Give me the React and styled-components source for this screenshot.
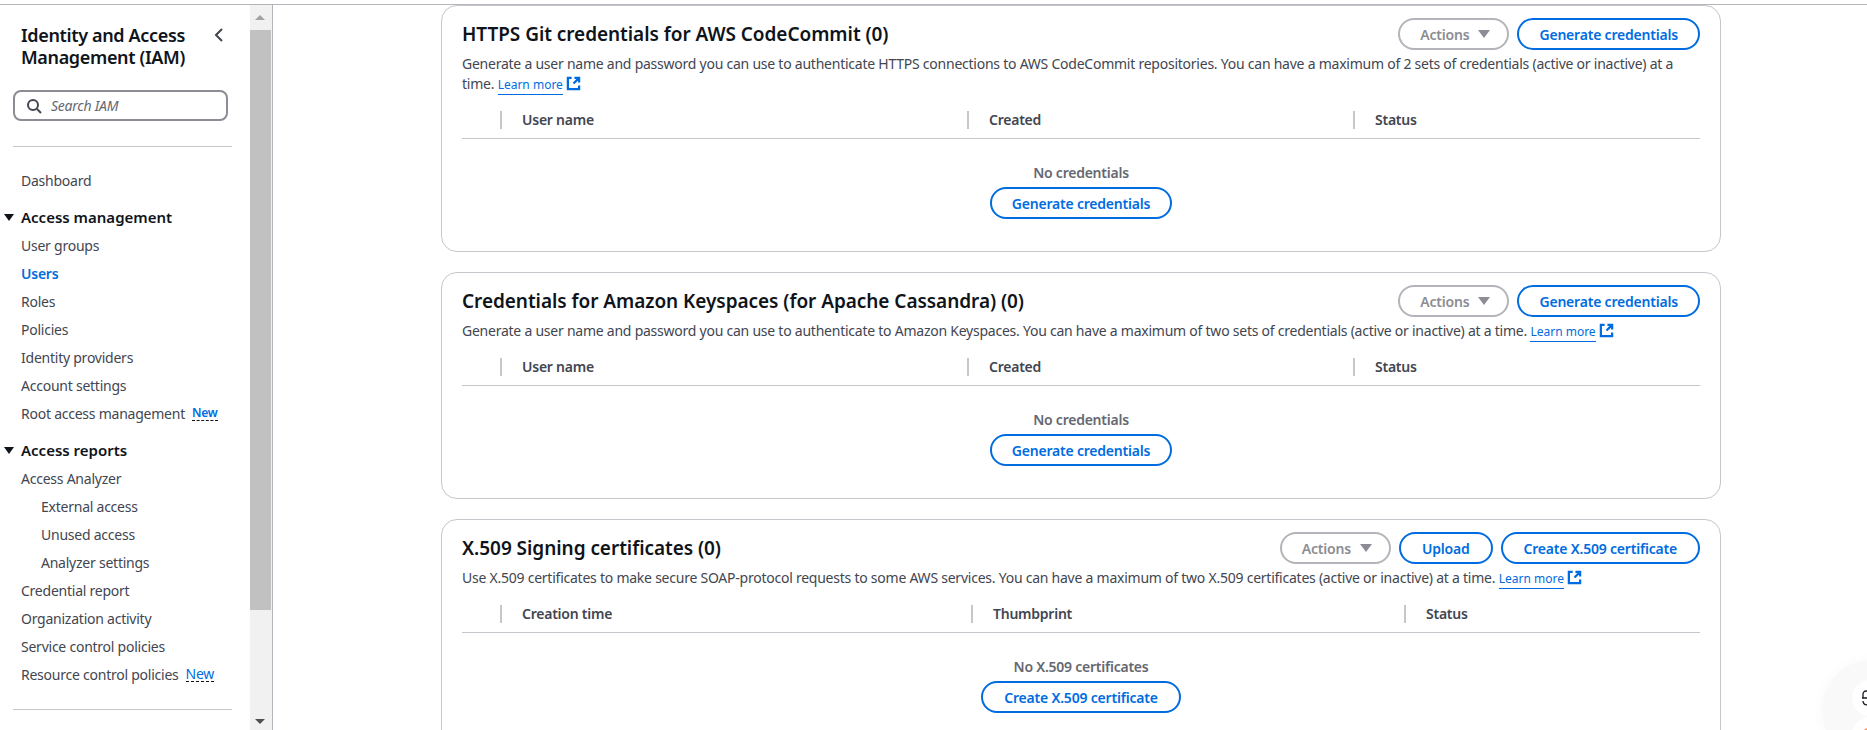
import styled, { createGlobalStyle } from "styled-components";

const GlobalStyle = createGlobalStyle`
	html, body {
		margin: 0;
		padding: 0;
		height: 100%;
		overflow: hidden;
		background: white;
	}
	* {
		box-sizing: border-box;
	}
`;

const Page = styled.div`
	height: 730px;
	font-family: "Noto Sans", sans-serif;
	letter-spacing: -0.24px;
	color: #424650;
	display: flex;
	flex-direction: column;
	position: relative;
	overflow: hidden;
`;
const TopLine = styled.div`
	height: 5px;
	flex: none;
	border-bottom: 1px solid #b4b4bb;
`;
const Body = styled.div`
	flex: 1;
	display: flex;
	min-height: 0;
`;
const Sidebar = styled.nav`
	width: 250px;
	flex: none;
	padding-top: 19px;
`;
const SideHead = styled.div`
	display: flex;
	justify-content: space-between;
	align-items: flex-start;
	padding: 0 25px 0 21px;
`;
const SideTitle = styled.h2`
	margin: 0;
	font-size: 18px;
	line-height: 22px;
	font-weight: 600;
	letter-spacing: -0.35px;
	color: #0f141a;
`;
const CollapseIcon = styled.svg`
	margin-top: 3px;
`;
const SearchBox = styled.div`
	margin: 22px 0 0 13px;
	width: 215px;
	height: 31px;
	border: 2px solid #8c8c94;
	border-radius: 8px;
	display: flex;
	align-items: center;
	gap: 9px;
	padding-left: 11px;
	font-size: 14px;
	font-style: italic;
	color: #656871;
`;
const Rule = styled.hr`
	margin: ${(p) => p.$top}px 18px 0 13px;
	border: none;
	border-top: 1px solid #c6c6cd;
`;
const NavList = styled.div`
	padding-top: 19px;
`;
const NavItem = styled.a`
	display: flex;
	align-items: center;
	height: 28px;
	padding-left: ${(p) => (p.$sub ? 41 : 21)}px;
	font-size: 14px;
	color: ${(p) => (p.$active ? "#006ce0" : "#424650")};
	font-weight: ${(p) => (p.$active ? 600 : 400)};
`;
const NavGroup = styled.div`
	display: flex;
	align-items: center;
	height: 22px;
	margin-top: 12px;
	margin-bottom: 3px;
	padding-left: 4px;
	gap: 7px;
	font-size: 15px;
	font-weight: 600;
	letter-spacing: 0;
	color: #0f141a;
`;
const GroupArrow = styled.span`
	width: 0;
	height: 0;
	border-left: 5px solid transparent;
	border-right: 5px solid transparent;
	border-top: 7px solid #0f141a;
`;
const NewTag = styled.span`
	margin-left: ${(p) => p.$gap}px;
	font-size: ${(p) => (p.$large ? 14 : 12)}px;
	font-weight: ${(p) => (p.$large ? 400 : 600)};
	color: #006ce0;
	line-height: 15px;
	border-bottom: 1px dashed #0f141a;
`;
const Scrollbar = styled.div`
	width: 23px;
	flex: none;
	background: #f1f1f1;
	border-right: 1px solid #b4b4bb;
	display: flex;
	flex-direction: column;
	align-items: center;
	padding: 10px 2px 6px 0;
`;
const ScrollArrow = styled.span`
	width: 0;
	height: 0;
	flex: none;
	border-left: 5px solid transparent;
	border-right: 5px solid transparent;
	${(p) => (p.$down ? "border-top: 5px solid #505050;" : "border-bottom: 5px solid #a3a3a3;")}
`;
const ScrollThumb = styled.div`
	width: 21px;
	height: 580px;
	margin: 10px 0 auto;
	background: #c1c1c1;
	flex: none;
`;
const Content = styled.main`
	flex: 1;
	min-width: 0;
	padding: 0 146px 0 168px;
	display: flex;
	flex-direction: column;
	gap: 20px;
`;
const Card = styled.section`
	flex: none;
	height: ${(p) => p.$height}px;
	border: 1px solid #c6c6cd;
	border-radius: 16px;
	padding: 12px 20px 0 20px;
`;
const CardHead = styled.div`
	display: flex;
	align-items: center;
	justify-content: space-between;
`;
const CardTitle = styled.h3`
	margin: 0;
	font-size: 19px;
	line-height: 32px;
	font-weight: 600;
	letter-spacing: -0.05px;
	color: #0f141a;
`;
const Actions = styled.div`
	display: flex;
	gap: 8px;
`;
const Button = styled.button`
	height: 32px;
	padding: ${(p) => (p.$disabled ? "0 17px 0 20px" : p.$wide ? "0 21px" : "0 20px")};
	border-radius: 16px;
	background: white;
	border: 2px solid ${(p) => (p.$disabled ? "#b4b4bb" : "#006ce0")};
	color: ${(p) => (p.$disabled ? "#8c8c94" : "#006ce0")};
	font-family: inherit;
	letter-spacing: -0.2px;
	font-size: 14px;
	font-weight: 600;
	display: inline-flex;
	align-items: center;
	gap: 9px;
`;
const CaretDown = styled.span`
	width: 0;
	height: 0;
	border-left: 6px solid transparent;
	border-right: 6px solid transparent;
	border-top: 8px solid #8c8c94;
`;
const Desc = styled.p`
	margin: 4px 0 0;
	font-size: 14px;
	line-height: 20px;
	color: #424650;
`;
const LearnMore = styled.a`
	font-size: 12px;
	letter-spacing: 0;
	color: #006ce0;
	border-bottom: 1px solid #006ce0;
	padding-bottom: 1px;
`;
const ExternalIcon = styled.svg`
	width: 15px;
	height: 15px;
	margin-left: 3px;
	vertical-align: -2px;
`;
const TableHead = styled.div`
	display: grid;
	grid-template-columns: ${(p) => p.$columns};
	margin-top: 9px;
	height: 35px;
	border-bottom: 1px solid #c6c6cd;
`;
const HeadCell = styled.div`
	height: 18px;
	margin-top: 7px;
	border-left: 2px solid #c6c6cd;
	padding-left: 20px;
	font-size: 14px;
	line-height: 18px;
	font-weight: 600;
	color: #424650;
`;
const Empty = styled.div`
	display: flex;
	flex-direction: column;
	align-items: center;
	padding-top: 24px;
	gap: 4px;
`;
const EmptyText = styled.div`
	font-size: 14px;
	line-height: 20px;
	font-weight: 600;
	color: #656871;
`;
const Dock = styled.div`
	position: absolute;
	right: -60px;
	bottom: -30px;
	width: 105px;
	height: 100px;
	border-radius: 50px;
	background: #f9f9f9;
	box-shadow: 0 0 14px #f9f9f9;
	display: flex;
	flex-direction: column;
	padding: 20px 0 0 30px;
	gap: 1px;
`;
const DockButton = styled.div`
	width: 36px;
	height: 36px;
	flex: none;
	border-radius: 50%;
	background: white;
	padding: 9px 0 0 9px;
`;

const External = () => (
	<ExternalIcon viewBox="0 0 16 16" fill="none" stroke="#006ce0" strokeWidth="2.4">
		<path d="M6 2H2v12h12v-4M9 2h5v5M14 2L8 8" />
	</ExternalIcon>
);

const TableSection = ({ columns, heads, emptyText, buttonText, wide }) => (
	<>
		<TableHead $columns={columns}>
			<div />
			{heads.map((h) => (
				<HeadCell key={h}>{h}</HeadCell>
			))}
		</TableHead>
		<Empty>
			<EmptyText>{emptyText}</EmptyText>
			<Button $wide={wide}>{buttonText}</Button>
		</Empty>
	</>
);

const App = () => {
	return (
		<Page>
			<GlobalStyle />
			<TopLine />
			<Body>
				<Sidebar>
					<SideHead>
						<SideTitle>
							Identity and Access
							<br />
							Management (IAM)
						</SideTitle>
						<CollapseIcon width="12" height="16" viewBox="0 0 12 16" fill="none" stroke="#424650" strokeWidth="2">
							<path d="M9 2L3 8l6 6" />
						</CollapseIcon>
					</SideHead>
					<SearchBox>
						<svg width="16" height="16" viewBox="0 0 16 16" fill="none" stroke="#424650" strokeWidth="2">
							<circle cx="7" cy="7" r="5" />
							<path d="M11 11l4 4" />
						</svg>
						Search IAM
					</SearchBox>
					<Rule $top={25} />
					<NavList>
						<NavItem>Dashboard</NavItem>
						<NavGroup>
							<GroupArrow />
							Access management
						</NavGroup>
						<NavItem>User groups</NavItem>
						<NavItem $active>Users</NavItem>
						<NavItem>Roles</NavItem>
						<NavItem>Policies</NavItem>
						<NavItem>Identity providers</NavItem>
						<NavItem>Account settings</NavItem>
						<NavItem>
							Root access management
							<NewTag $gap={7}>New</NewTag>
						</NavItem>
						<NavGroup>
							<GroupArrow />
							Access reports
						</NavGroup>
						<NavItem>Access Analyzer</NavItem>
						<NavItem $sub>External access</NavItem>
						<NavItem $sub>Unused access</NavItem>
						<NavItem $sub>Analyzer settings</NavItem>
						<NavItem>Credential report</NavItem>
						<NavItem>Organization activity</NavItem>
						<NavItem>Service control policies</NavItem>
						<NavItem>
							Resource control policies
							<NewTag $gap={7} $large>
								New
							</NewTag>
						</NavItem>
					</NavList>
					<Rule $top={21} />
				</Sidebar>
				<Scrollbar>
					<ScrollArrow />
					<ScrollThumb />
					<ScrollArrow $down />
				</Scrollbar>
				<Content>
					<Card $height={247}>
						<CardHead>
							<CardTitle>HTTPS Git credentials for AWS CodeCommit (0)</CardTitle>
							<Actions>
								<Button $disabled>
									Actions <CaretDown />
								</Button>
								<Button>Generate credentials</Button>
							</Actions>
						</CardHead>
						<Desc>
							Generate a user name and password you can use to authenticate HTTPS connections to AWS CodeCommit
							repositories. You can have a maximum of 2 sets of credentials (active or inactive) at a time.{" "}
							<LearnMore>Learn more</LearnMore>
							<External />
						</Desc>
						<TableSection
							columns="38px 467px 386px 1fr"
							heads={["User name", "Created", "Status"]}
							emptyText="No credentials"
							buttonText="Generate credentials"
						/>
					</Card>
					<Card $height={227}>
						<CardHead>
							<CardTitle>Credentials for Amazon Keyspaces (for Apache Cassandra) (0)</CardTitle>
							<Actions>
								<Button $disabled>
									Actions <CaretDown />
								</Button>
								<Button>Generate credentials</Button>
							</Actions>
						</CardHead>
						<Desc>
							Generate a user name and password you can use to authenticate to Amazon Keyspaces. You can have a maximum
							of two sets of credentials (active or inactive) at a time. <LearnMore>Learn more</LearnMore>
							<External />
						</Desc>
						<TableSection
							columns="38px 467px 386px 1fr"
							heads={["User name", "Created", "Status"]}
							emptyText="No credentials"
							buttonText="Generate credentials"
						/>
					</Card>
					<Card $height={227}>
						<CardHead>
							<CardTitle>X.509 Signing certificates (0)</CardTitle>
							<Actions>
								<Button $disabled>
									Actions <CaretDown />
								</Button>
								<Button $wide>Upload</Button>
								<Button $wide>Create X.509 certificate</Button>
							</Actions>
						</CardHead>
						<Desc>
							Use X.509 certificates to make secure SOAP-protocol requests to some AWS services. You can have a maximum
							of two X.509 certificates (active or inactive) at a time. <LearnMore>Learn more</LearnMore>
							<External />
						</Desc>
						<TableSection
							columns="38px 471px 433px 1fr"
							heads={["Creation time", "Thumbprint", "Status"]}
							emptyText="No X.509 certificates"
							buttonText="Create X.509 certificate"
							wide
						/>
					</Card>
				</Content>
			</Body>
			<Dock>
				<DockButton>
					<svg width="16" height="18" viewBox="0 0 16 18" fill="none" stroke="#16191f" strokeWidth="1.3">
						<path d="M2 9V5a3 3 0 0 1 6 0v4M1 9h14M2 12c0 3 2 4 5 4" />
					</svg>
				</DockButton>
				<DockButton>
					<svg width="16" height="16" viewBox="0 0 16 16">
						<circle cx="8" cy="8" r="7" fill="#f2709c" />
						<path d="M1 8a7 7 0 0 1 14 0z" fill="#f7a14a" />
					</svg>
				</DockButton>
			</Dock>
		</Page>
	);
};

export default App;
